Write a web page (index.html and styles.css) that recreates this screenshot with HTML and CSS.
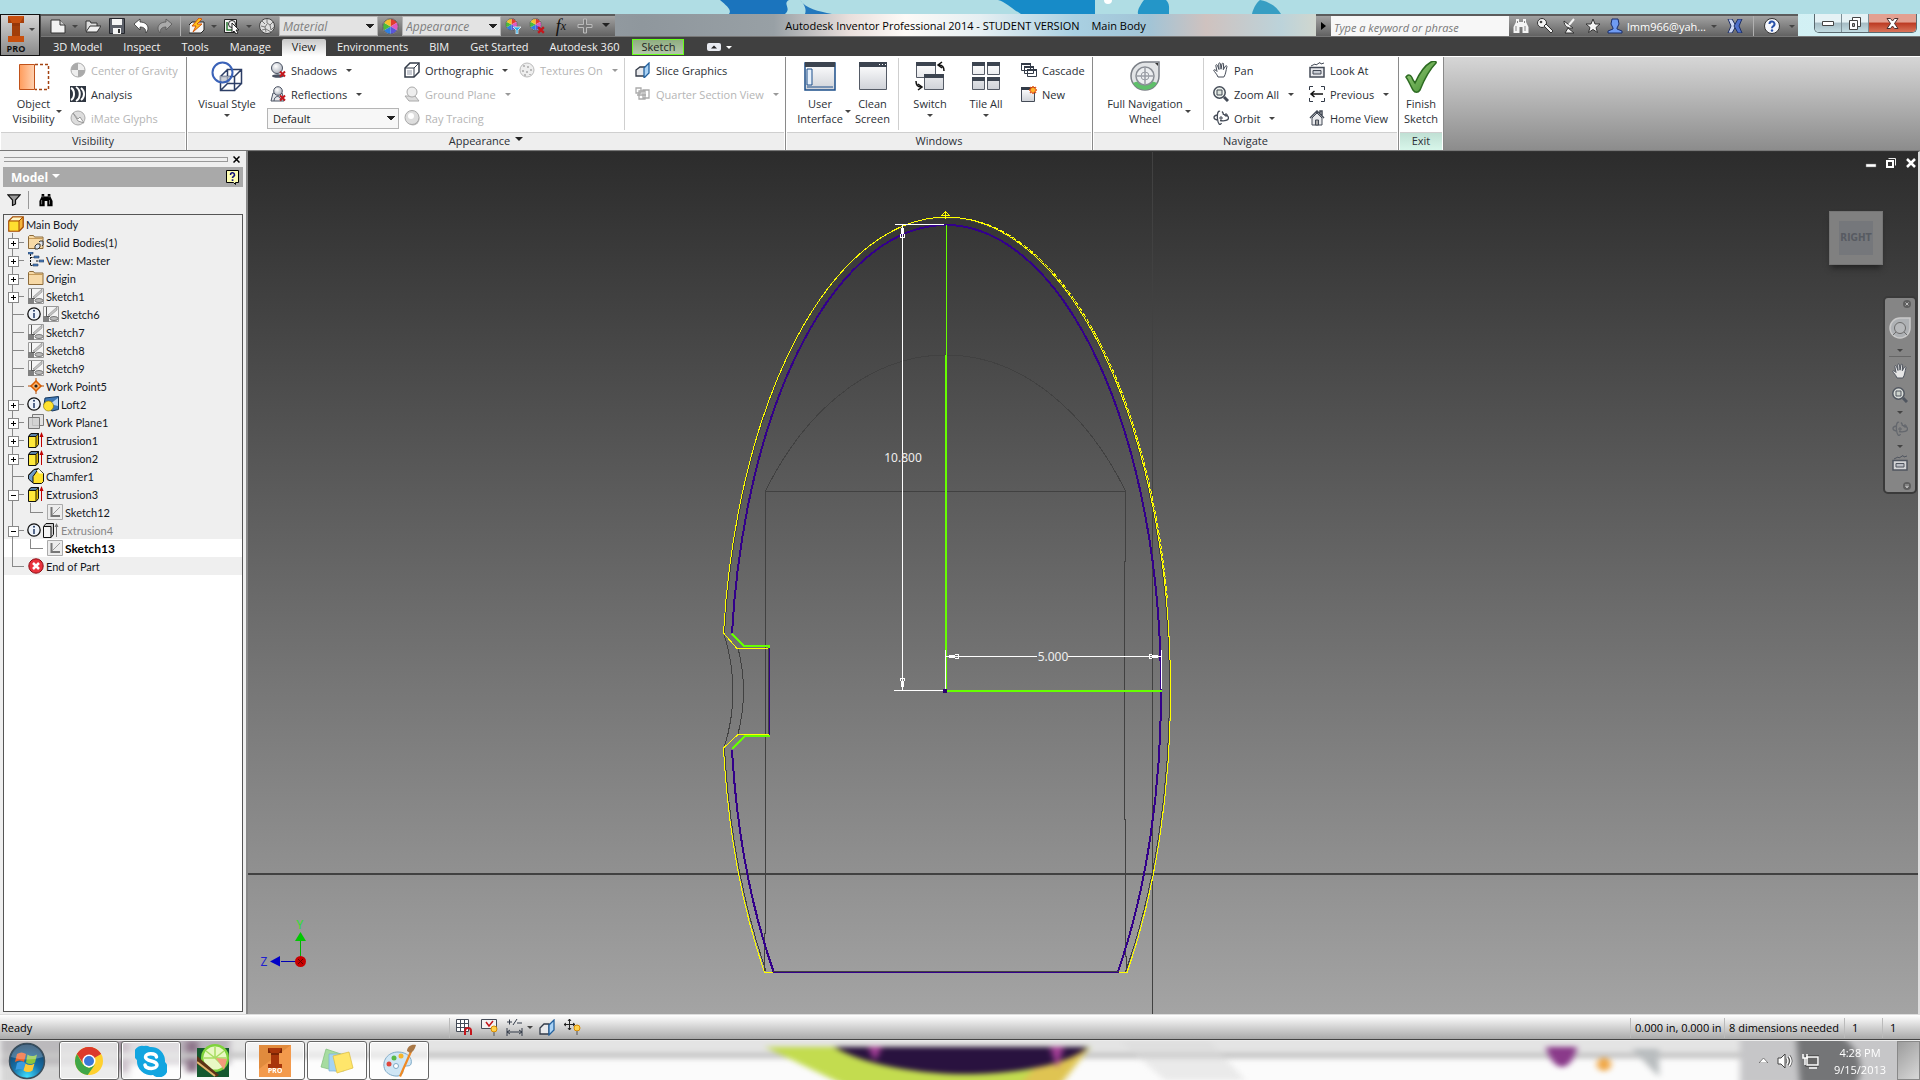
FILE: index.html
```html
<!DOCTYPE html>
<html lang="en">
<head>
    <meta charset="UTF-8">
    <meta name="viewport" content="width=device-width, initial-scale=1.0">
    <title>Autodesk Inventor Professional 2014 - Main Body</title>
    <link rel="stylesheet" href="styles.css">
</head>
<body>
    <!-- Shared icons -->
    <svg class="defs" width="0" height="0" aria-hidden="true">
        <defs>
            <linearGradient id="viewBg" x1="0" y1="0" x2="0" y2="1"><stop offset="0" stop-color="#2c2c2c"/><stop offset="1" stop-color="#a4a4a4"/></linearGradient>
            <linearGradient id="pane" x1="0" y1="0" x2="0" y2="1"><stop offset="0" stop-color="#fff"/><stop offset="1" stop-color="#cfd2d8"/></linearGradient>
            <linearGradient id="orange" x1="0" y1="0" x2="1" y2="0"><stop offset="0" stop-color="#ff9c5c"/><stop offset="1" stop-color="#ffd3b3"/></linearGradient>
            <linearGradient id="tick" x1="0" y1="0" x2="1" y2="1"><stop offset="0" stop-color="#9bd07c"/><stop offset="1" stop-color="#3f8a2e"/></linearGradient>
            <radialGradient id="ball" cx=".4" cy=".35" r=".7"><stop offset="0" stop-color="#fff"/><stop offset="1" stop-color="#aab0bb"/></radialGradient>
            <radialGradient id="orb" cx=".5" cy=".95" r=".95"><stop offset="0" stop-color="#3fe0ff"/><stop offset=".45" stop-color="#1670a8"/><stop offset="1" stop-color="#12375a"/></radialGradient>
        </defs>
        <symbol id="i-sketch" viewBox="0 0 16 16">
            <path d="M.5.500h15v15H.5z" fill="#f4f4f4" stroke="#999"/>
            <path d="M0 10h6v6H0z" fill="#808080"/>
            <path d="M3.500 1v9.500H7" fill="none" stroke="#555"/>
            <path d="M5 9l9-8v3l-7 6z" fill="#c4c4c4" stroke="#888" stroke-width=".6"/>
            <ellipse cx="11" cy="12.500" rx="4" ry="2" fill="#bbb" stroke="#777"/>
        </symbol>
        <symbol id="i-sketch-lite" viewBox="0 0 16 16">
            <path d="M.5.500h15v15H.5z" fill="#ececec" stroke="#aaa"/>
            <path d="M4.500 3v9H13" fill="none" stroke="#777" stroke-width="2"/>
            <path d="M5 11l8-8" stroke="#999"/>
        </symbol>
        <symbol id="i-extrude" viewBox="0 0 16 16">
            <path d="M.5 4.500L3 1.500h7.500v11L8 15.500H.5z" fill="#d9b400" stroke="#111"/>
            <path d="M.5 4.500L3 1.500h7.500L8 4.500z" fill="#5c83a8" stroke="#111"/>
            <path d="M1 5h6.500v10H1z" fill="#ffe83a"/>
            <path d="M8 5v10" stroke="#111" stroke-width=".8"/>
            <path d="M13.500 15V4" stroke="#c00000"/><path d="M11.500 5l2-5 2 5z" fill="#c00000"/>
        </symbol>
        <symbol id="i-extrude-gray" viewBox="0 0 16 16">
            <path d="M.5 4.500L3 1.500h7.500v11L8 15.500H.5z" fill="#ccc" stroke="#111"/>
            <path d="M1 5h6.500v10H1z" fill="#f6f6f6"/><path d="M1 4.500h7v11" fill="none" stroke="#111"/>
            <path d="M13.500 15V3" stroke="#777"/><path d="M11.500 5l2-4 2 4z" fill="#777"/>
        </symbol>
        <symbol id="i-info" viewBox="0 0 14 14">
            <circle cx="7" cy="7" r="6.200" fill="#eef3fa" stroke="#111" stroke-width="1.300"/>
            <path d="M7 6v5" stroke="#223a66" stroke-width="1.500"/><circle cx="7" cy="3.800" r="1" fill="#223a66"/>
        </symbol>
        <symbol id="i-folder" viewBox="0 0 16 16">
            <path d="M.5 14.500v-12l1-1h4l1 1.500h8.500v11.500z" fill="#f7d9a6" stroke="#8b6a3a"/>
            <path d="M1 4.500h14" stroke="#c59b5a"/>
        </symbol>
        <symbol id="i-hand" viewBox="0 0 16 16">
            <path d="M5 15C4 12 1 9.500.700 8.200c.6-1 2-.2 3.300 1.300L2.800 3.500c.2-1.200 1.300-1 1.700 0L6 7.500 5.700 1.800c.2-1.200 1.500-1.200 1.800 0L8 7.200 9 1.800c.4-1 1.600-.8 1.600.3L10.300 7.700 12.500 4c.7-.8 1.700-.2 1.400.8-1 3.500-1 7.200-3 10.200z" fill="#fff" stroke="#444b57"/>
        </symbol>
        <symbol id="i-zoom" viewBox="0 0 16 16">
            <circle cx="6.500" cy="6.500" r="5.700" fill="#eef3ee" stroke="#444b57" stroke-width="1.500"/>
            <path d="M4 4h5v5H4z" fill="#dde4dd" stroke="#444b57"/><path d="M11 11l4 4" stroke="#444b57" stroke-width="3"/>
        </symbol>
        <symbol id="i-orbit" viewBox="0 0 16 16">
            <path d="M7 1.500C5 0 4 4 4.500 9S7 16 8.500 13M9 1.500C10 2.500 10.500 4 10.500 5M4 5C0 6 0 9 4 10M7 10.500c5 1 8.500-.5 8.500-2.500S13 5 11 4.700" fill="none" stroke="#444b57" stroke-width="1.300"/>
            <path d="M6 8h4M8 6v4M13 3v4M11 5h4" stroke="#444b57"/>
        </symbol>
        <symbol id="i-lookat" viewBox="0 0 16 16">
            <path d="M1 5.500h14v9.500H1z" fill="#e8e9ec" stroke="#444b57" stroke-width="1.500"/>
            <path d="M4 8.500h8v3.500H4z" fill="#c8ccd4" stroke="#444b57"/><path d="M2 4l4-2 1 1 4-2.500 1 1.500 3-1" fill="none" stroke="#444b57"/>
        </symbol>
        <symbol id="i-rgb" viewBox="0 0 16 16">
            <circle cx="8" cy="8" r="7.500" fill="#eee"/>
            <path d="M8 8V1a7 7 0 0 1 6 3.500z" fill="#e23b2e"/><path d="M8 8l6-3.500a7 7 0 0 1 0 7z" fill="#e05ac0"/>
            <path d="M8 8l6 3.500A7 7 0 0 1 8 15z" fill="#5a55d8"/><path d="M8 8v7a7 7 0 0 1-6-3.500z" fill="#2f7fe0"/>
            <path d="M8 8l-6 3.500a7 7 0 0 1 0-7z" fill="#4cba3a"/><path d="M8 8L2 4.500A7 7 0 0 1 8 1z" fill="#f6c12c"/>
            <circle cx="8" cy="8" r="7.300" fill="none" stroke="#333" stroke-width=".7"/>
        </symbol>
        <symbol id="i-redx" viewBox="0 0 7 7"><path d="M1 1l5 5M6 1L1 6" stroke="#c4161c" stroke-width="2"/></symbol>
        <symbol id="i-bino" viewBox="0 0 16 16">
            <path d="M3 1h3v3h4V1h3v3l2.500 5v6H9.500V9h-3v6H.5V9L3 4z" fill="currentColor"/>
            <path d="M3 8v5M12 8v5M4.500 3v2M11.500 3v2" stroke="#888" stroke-width="1"/>
        </symbol>
    </svg>

    <!-- Strip of wallpaper above the maximised window -->
    <div class="wallpaper">
        <svg viewBox="0 0 1920 14" preserveAspectRatio="none" aria-hidden="true">
            <path d="M720 0h69c-7 4 3 8-4 14h-56c3-4-2-8-9-14z" fill="#1b74bd"/>
            <path d="M800 0c6 9 18 11 32 14h-27c2-5-1-10-5-14z" fill="#2478bd"/>
            <path d="M998 0h97v14h-74C1012 9 1006 2 998 0z" fill="#178bc8"/>
            <path d="M1144 0h22c4 4 3 8 3 14h-31c-1-4 3-10 6-14z" fill="#2496c8"/>
            <path d="M1252 14c1-5 4-11 8-14 10 2 17 7 21 14z" fill="#379ec3"/>
            <circle cx="1108" cy="0" r="4" fill="#fff"/>
        </svg>
    </div>

    <header class="app-header">
        <button class="app-button" aria-label="Application menu">
            <svg width="18" height="27" viewBox="0 0 18 27"><path d="M1 0h16v7h-4v13h4v6H1v-6h4V7H1z" fill="#c8500f"/><path d="M5 7h8v13H5z" fill="#a23e0a"/><path d="M1 0l4 7h8l4-7v7h-4v3H5V7H1z" fill="#8f3407" opacity=".6"/></svg>
            <i class="caret"></i>
            <span>PRO</span>
        </button>

        <div class="titlebar">
            <div class="qat">
                <button aria-label="New"><svg width="16" height="16" viewBox="0 0 16 16"><path d="M1 2h9l5 5v8H1z" fill="#f2f2f2" stroke="#333"/><path d="M10 2v5h5" fill="#ccc" stroke="#333"/></svg></button>
                <i class="caret narrow"></i>
                <button aria-label="Open"><svg width="16" height="16" viewBox="0 0 16 16"><path d="M1 13V3h4l1 2h6v3" fill="#ddd" stroke="#333"/><path d="M1 14l4-6h11l-4 6z" fill="#f0f0f0" stroke="#333"/></svg></button>
                <button aria-label="Save"><svg width="16" height="16" viewBox="0 0 16 16"><path d="M.5.500h15v15H.5z" fill="#5b5f68" stroke="#26282d"/><path d="M3 1h10v6H3zM4 10h8v6H4z" fill="#f4f4f4"/><path d="M9 11h2v4H9z" fill="#333"/></svg></button>
                <button aria-label="Undo"><svg width="16" height="16" viewBox="0 0 16 16"><path d="M1 6l6-5v3c5 0 8 3 8 6 0 2-1 4-2 5 0-4-2-6-6-6v3z" fill="#fff" stroke="#333" stroke-width=".8"/></svg></button>
                <button aria-label="Redo"><svg width="16" height="16" viewBox="0 0 16 16"><path d="M15 6L9 1v3C4 4 1 7 1 10c0 2 1 4 2 5 0-4 2-6 6-6v3z" fill="#aaa" stroke="#555" stroke-width=".8"/></svg></button>
                <span class="bar-sep"></span>
                <button aria-label="Update"><svg width="16" height="16" viewBox="0 0 16 16"><path d="M0 7l3-3h12v8l-3 3H0z" fill="#f4f4f4" stroke="#222"/><path d="M10 0L3 8h4l-3 6 9-8H8l5-5z" fill="#ffc21a" stroke="#d4550c"/></svg></button>
                <i class="caret narrow"></i>
                <button aria-label="Select"><svg width="16" height="16" viewBox="0 0 16 16"><path d="M.5 1.500h12v13H.5z" fill="#f4f4f4" stroke="#222"/><path d="M3 4v8h7" fill="none" stroke="#2d7a35" stroke-width="1.500"/><circle cx="8" cy="6" r="3.500" fill="none" stroke="#222"/><path d="M8 5v10l2-2 2 3 2-1-2-3h3z" fill="#fff" stroke="#222"/></svg></button>
                <i class="caret narrow"></i>
                <button aria-label="Adjust material"><svg width="16" height="16" viewBox="0 0 16 16"><circle cx="8" cy="8" r="7.500" fill="#ddd" stroke="#444"/><path d="M3 3l3 3M8 1v4l3 2 3-3M2 8l4 1 2-3M6 9l1 5M11 7l1 5 3-3M3 12l4-1 5 3" stroke="#777" fill="none"/></svg></button>
                <select class="qat-select" aria-label="Material"><option>Material</option></select>
                <button aria-label="Appearance browser"><svg width="17" height="17"><use href="#i-rgb"/></svg></button>
                <select class="qat-select" aria-label="Appearance"><option>Appearance</option></select>
                <button aria-label="Adjust appearance"><svg width="16" height="16" viewBox="0 0 16 16"><use href="#i-rgb" width="13" height="13"/><path d="M8 9h8l-3 3v4h-2v-4z" fill="#2aa9e6" stroke="#fff" stroke-width=".7"/></svg></button>
                <button aria-label="Clear appearance"><svg width="16" height="16" viewBox="0 0 16 16"><use href="#i-rgb" width="13" height="13"/><use href="#i-redx" x="8" y="8" width="8" height="8"/></svg></button>
                <button class="fx" aria-label="Parameters">f<sub>x</sub></button>
                <button aria-label="Add"><svg width="16" height="16" viewBox="0 0 16 16"><path d="M6.500 1h3v5.500H15v3H9.500V15h-3V9.500H1v-3h5.500z" fill="#777" stroke="#bbb"/></svg></button>
                <button class="qat-more" aria-label="Customize"><i class="caret big"></i></button>
            </div>
            <h1 class="window-title">Autodesk Inventor Professional 2014 - STUDENT VERSION <span>Main Body</span></h1>
            <div class="infocenter">
                <button class="ic-arrow" aria-label="Collapse search"><svg width="5" height="8" viewBox="0 0 5 8"><path d="M0 0l5 4-5 4z" fill="#000"/></svg></button>
                <input type="text" placeholder="Type a keyword or phrase" aria-label="Search help">
                <button class="white" aria-label="Search"><svg width="16" height="16"><use href="#i-bino"/></svg></button>
                <button aria-label="Subscription"><svg width="18" height="16" viewBox="0 0 18 16"><circle cx="6" cy="5" r="4.500" fill="#f4f4f4" stroke="#333"/><path d="M8 8l7 7 2-2-7-7z" fill="#f4f4f4" stroke="#333"/><circle cx="5" cy="4" r="1.300" fill="#444"/></svg></button>
                <button aria-label="Communication Center"><svg width="15" height="16" viewBox="0 0 15 16"><path d="M2 3c0 5 4 8 9 7z" fill="#f4f4f4" stroke="#333"/><path d="M7 7l5-6" stroke="#f4f4f4" stroke-width="2"/><path d="M3 15l3-5 6 5z" fill="#f4f4f4" stroke="#333"/></svg></button>
                <button aria-label="Favorites"><svg width="16" height="16" viewBox="0 0 16 16"><path d="M8 1l2 5h5l-4 3.500 1.500 5L8 11.500l-4.500 3 1.500-5L1 6h5z" fill="#f4f4f4" stroke="#333"/></svg></button>
                <button class="user" aria-label="Account"><svg width="16" height="16" viewBox="0 0 16 16"><path d="M5 1h6l1 5-2 4v1l5 2v2H1v-2l5-2v-1L4 6z" fill="#6f9bf2" stroke="#1b2f6b"/></svg>lmm966@yah...</button>
                <i class="caret narrow"></i>
                <button class="exchange" aria-label="Exchange Apps"><svg width="16" height="14" viewBox="0 0 16 14"><path d="M1 0h4l4 7-4 7H1l3-7z" fill="#cdd8f5" stroke="#1d2f66"/><path d="M15 0h-4L7 7l4 7h4l-3-7z" fill="#4f6fc9" stroke="#1d2f66"/></svg></button>
                <span class="bar-sep"></span>
                <button class="help" aria-label="Help"><svg width="16" height="16" viewBox="0 0 16 16"><circle cx="8" cy="8" r="7.500" fill="#f4f6fb" stroke="#333"/><path d="M5.500 6a2.500 2.500 0 1 1 3.500 2.300c-.8.500-1 .900-1 1.900" fill="none" stroke="#2750a8" stroke-width="2"/><circle cx="8" cy="12.500" r="1.200" fill="#2750a8"/></svg></button>
                <i class="caret narrow"></i>
            </div>
            <div class="window-buttons">
                <button aria-label="Minimize"><svg width="12" height="6" viewBox="0 0 12 6"><path d="M.5 1.500h11v4H.5z" fill="#fff" stroke="#444"/></svg></button>
                <button aria-label="Restore"><svg width="12" height="13" viewBox="0 0 12 13"><path d="M3.500.500h8v9h-8z" fill="#fff" stroke="#444"/><path d="M.5 3.500h8v9h-8z" fill="#fff" stroke="#444"/><path d="M3.500 6.500h2v3h-2z" fill="#aaa" stroke="#444"/></svg></button>
                <button class="close" aria-label="Close"><svg width="13" height="11" viewBox="0 0 13 11"><path d="M1 .5h3.500l2 2.500 2-2.500H12L8.500 5.500l3.500 5H8.500l-2-2.500-2 2.500H1l3.500-5z" fill="#fff" stroke="#4a3030"/></svg></button>
            </div>
        </div>

        <nav class="tabs">
            <a href="#">3D Model</a>
            <a href="#">Inspect</a>
            <a href="#">Tools</a>
            <a href="#">Manage</a>
            <a href="#" class="active">View</a>
            <a href="#">Environments</a>
            <a href="#">BIM</a>
            <a href="#">Get Started</a>
            <a href="#">Autodesk 360</a>
            <a href="#" class="sketch">Sketch</a>
            <button class="tab-toggle" aria-label="Minimize ribbon"><svg width="14" height="8" viewBox="0 0 14 8"><rect width="14" height="8" rx="2" fill="#e8eaf0"/><path d="M4 5.500l3-3 3 3z" fill="#222"/></svg><i class="caret light"></i></button>
        </nav>
    </header>

    <div class="ribbon">
        <section class="panel visibility">
            <div class="panel-body">
                <button class="big"><svg width="32" height="32" viewBox="0 0 32 32"><path d="M1.500 3.500h15v25h-15z" fill="url(#orange)" stroke="#c0521a"/><path d="M17 3.500h13.500v25H17" fill="none" stroke="#a34312" stroke-width="1.500" stroke-dasharray="3 2"/></svg><span>Object<br>Visibility</span><i class="caret"></i></button>
                <div class="col">
                    <button class="item" disabled><svg width="16" height="16" viewBox="0 0 16 16"><circle cx="8" cy="8" r="7" fill="#eee" stroke="#aaa"/><path d="M8 8V1a7 7 0 0 0-7 7zM8 8v7a7 7 0 0 0 7-7z" fill="#aaa"/></svg>Center of Gravity</button>
                    <button class="item"><svg width="16" height="16" viewBox="0 0 16 16"><path d="M0 0h16v16H0z" fill="#2e3540"/><path d="M1 2c4 2 4 10 0 12M6 1c5 3 5 11 0 14M11 2c4 3 4 9 0 12" fill="none" stroke="#fff" stroke-width="2"/></svg>Analysis</button>
                    <button class="item" disabled><svg width="16" height="16" viewBox="0 0 16 16"><circle cx="8" cy="8" r="7" fill="#ddd" stroke="#aaa"/><path d="M3 3l5 6 2-2 4 6-6-2z" fill="#fff" stroke="#999"/></svg>iMate Glyphs</button>
                </div>
            </div>
            <h2>Visibility</h2>
        </section>

        <section class="panel appearance">
            <div class="panel-body">
                <button class="big"><svg width="32" height="32" viewBox="0 0 32 32"><path d="M9.500 15.500h14v14h-14zM16.500 8.500h14v14h-14zM9.500 15.500l7-7M23.500 15.500l7-7M23.500 29.500l7-7M9.500 29.500l7-7" fill="none" stroke="#2c3e66" stroke-width="1.500"/><path d="M9 15h10v7H9z" fill="#b9bdc6" opacity=".7"/><circle cx="11.500" cy="11.500" r="10" fill="none" stroke="#3a62b8" stroke-width="2"/></svg><span>Visual Style</span><i class="caret below"></i></button>
                <div class="col">
                    <button class="item"><svg width="16" height="16" viewBox="0 0 16 16"><ellipse cx="8" cy="14" rx="6" ry="1.800" fill="#4a5262"/><circle cx="7" cy="6" r="5.500" fill="url(#ball)" stroke="#4a5262"/><use href="#i-redx" x="9" y="8" width="7" height="8"/></svg>Shadows<i class="caret"></i></button>
                    <button class="item"><svg width="16" height="16" viewBox="0 0 16 16"><path d="M1 15l2-8h9l2 8z" fill="#e4e6ea" stroke="#4a5262"/><circle cx="8" cy="5" r="4.300" fill="url(#ball)" stroke="#4a5262"/><path d="M4 15c0-6 7-6 7 0" fill="none" stroke="#4a5262"/><use href="#i-redx" x="9" y="8" width="7" height="8"/></svg>Reflections<i class="caret"></i></button>
                    <select class="ribbon-select" aria-label="Lighting style"><option>Default</option></select>
                </div>
                <div class="col">
                    <button class="item"><svg width="16" height="16" viewBox="0 0 16 16"><path d="M1 6l5-5h9v9l-5 5H1z" fill="#fff" stroke="#333b48" stroke-width="1.500"/><path d="M1 6h9v9" fill="none" stroke="#333b48"/><path d="M10 6l5-5" stroke="#333b48"/><path d="M3 8h5v5H3z" fill="#c9ccd3"/></svg>Orthographic<i class="caret"></i></button>
                    <button class="item" disabled><svg width="16" height="16" viewBox="0 0 16 16"><path d="M1 10h10l4 5H5z" fill="#ddd" stroke="#aaa"/><circle cx="8" cy="6" r="5" fill="#eee" stroke="#aaa"/></svg>Ground Plane<i class="caret"></i></button>
                    <button class="item" disabled><svg width="16" height="16" viewBox="0 0 16 16"><circle cx="9" cy="9" r="6.500" fill="#bbb"/><circle cx="8" cy="7.500" r="7" fill="#ddd" stroke="#aaa"/><circle cx="7" cy="6" r="3" fill="#fff"/></svg>Ray Tracing</button>
                </div>
                <div class="col">
                    <button class="item" disabled><svg width="16" height="16" viewBox="0 0 16 16"><circle cx="8" cy="8" r="7" fill="#eee" stroke="#bbb"/><path d="M5 3v2M9 4v2M12 7v2M4 8v2M8 9v2M11 12v1M6 12v2" stroke="#bbb" stroke-width="2"/></svg>Textures On<i class="caret"></i></button>
                </div>
                <div class="col divided">
                    <button class="item"><svg width="16" height="16" viewBox="0 0 16 16"><path d="M1 8l4-3h5v9H1z" fill="#e8e9ec" stroke="#333b48" stroke-width="1.300"/><path d="M9 6l5-5v10l-5 5z" fill="#a9d2f5" stroke="#23619e" stroke-width="1.300"/></svg>Slice Graphics</button>
                    <button class="item" disabled><svg width="16" height="16" viewBox="0 0 16 16"><path d="M1 2h5v5H1zM4 5h6v8H4zM8 4h6v8H8zM2 9h9" fill="none" stroke="#aaa" stroke-width="1.300"/></svg>Quarter Section View<i class="caret"></i></button>
                </div>
            </div>
            <h2>Appearance <i class="caret big"></i></h2>
        </section>

        <section class="panel windows">
            <div class="panel-body">
                <button class="big"><svg width="32" height="32" viewBox="0 0 32 32"><path d="M1 2h30v27H1z" fill="url(#pane)" stroke="#1c4f8a" stroke-width="1.500"/><path d="M1 1h30v5H1z" fill="#3c4450"/><path d="M3 8h5v16H3zM3 26h26" fill="#e6f0fb" stroke="#1c4f8a"/></svg><span>User<br>Interface</span><i class="caret"></i></button>
                <button class="big"><svg width="30" height="32" viewBox="0 0 30 32"><path d="M1.500 2.500h27v26h-27z" fill="url(#pane)" stroke="#555b66"/><path d="M1 1h28v5H1z" fill="#3c4450"/><path d="M21 3.500h1M24 3.500h1M27 3.500h1" stroke="#fff"/></svg><span>Clean<br>Screen</span></button>
                <span class="panel-sep"></span>
                <button class="big"><svg width="32" height="32" viewBox="0 0 32 32"><path d="M2.500 2.500h19v14h-19zM10.500 14.500h19v14h-19z" fill="url(#pane)" stroke="#555b66"/><path d="M2 1h20v4H2zM10 13h20v4H10z" fill="#3c4450"/><path d="M25 4c4 0 5 2 5 6M28 1l-4 3 4 3M7 26c-4 0-5-2-5-6M4 29l4-3-4-3" fill="none" stroke="#111" stroke-width="1.500"/></svg><span>Switch</span><i class="caret below"></i></button>
                <button class="big"><svg width="32" height="32" viewBox="0 0 32 32"><path d="M2.500 2.500h12v11h-12zM17.500 2.500h12v11h-12zM2.500 17.500h12v11h-12zM17.500 17.500h12v11h-12z" fill="url(#pane)" stroke="#555b66"/><path d="M2 1h13v4H2zM17 1h13v4H17zM2 16h13v4H2zM17 16h13v4H17z" fill="#3c4450"/></svg><span>Tile All</span><i class="caret below"></i></button>
                <div class="col">
                    <button class="item"><svg width="16" height="16" viewBox="0 0 16 16"><path d="M.5 1.500h9v7h-9zM3.500 4.500h9v7h-9zM6.500 7.500h9v7h-9z" fill="#fff" stroke="#333b48"/><path d="M0 1h10v2H0zM3 4h10v2H3zM6 7h10v2H6z" fill="#333b48"/></svg>Cascade</button>
                    <button class="item"><svg width="16" height="16" viewBox="0 0 16 16"><path d="M.5 2.500h13v13H.5z" fill="url(#pane)" stroke="#444b57"/><path d="M0 1h14v3H0z" fill="#333b48"/><path d="M12 0l1 2 2-1-1 2 2 1-2 1 1 2-2-1-1 2-1-2-2 1 1-2-2-1 2-1-1-2 2 1z" fill="#ffb52a" stroke="#e0420a" stroke-width=".8"/></svg>New</button>
                </div>
            </div>
            <h2>Windows</h2>
        </section>

        <section class="panel navigate">
            <div class="panel-body">
                <button class="big"><svg width="32" height="32" viewBox="0 0 32 32"><path d="M16 1h14v14a14 14 0 1 1-14-14z" fill="#e2e4e6" stroke="#7b7f86" stroke-width="1.500"/><path d="M4 22c6-3 18-3 24 0-5 9-19 9-24 0z" fill="#5fbf6a"/><circle cx="16" cy="15" r="9" fill="#eceef0" stroke="#8a8e95" stroke-width="1.500"/><path d="M16 6v18M7 15h18" stroke="#9a9ea5" stroke-width="1.500"/><circle cx="16" cy="15" r="4" fill="none" stroke="#9a9ea5"/><path d="M26 2l3 0v3z" fill="#333"/></svg><span>Full Navigation<br>Wheel</span><i class="caret"></i></button>
                <span class="panel-sep"></span>
                <div class="col">
                    <button class="item"><svg width="16" height="16"><use href="#i-hand"/></svg>Pan</button>
                    <button class="item"><svg width="16" height="16"><use href="#i-zoom"/></svg>Zoom All<i class="caret"></i></button>
                    <button class="item"><svg width="16" height="16"><use href="#i-orbit"/></svg>Orbit<i class="caret"></i></button>
                </div>
                <div class="col">
                    <button class="item"><svg width="16" height="16"><use href="#i-lookat"/></svg>Look At</button>
                    <button class="item"><svg width="16" height="16" viewBox="0 0 16 16"><path d="M4 .500H.500V4M12 .500h3.500V4M4 15.500H.500V12M12 15.500h3.500V12" fill="none" stroke="#333b48"/><path d="M2 8h12M5.500 5L2 8l3.500 3" fill="none" stroke="#111" stroke-width="1.500"/></svg>Previous<i class="caret"></i></button>
                    <button class="item"><svg width="16" height="16" viewBox="0 0 16 16"><path d="M1 8l7-7 7 7M11 4V1h2v5" fill="none" stroke="#444b57" stroke-width="1.500"/><path d="M3 8v7h10V8L8 3z" fill="#e8e9ec" stroke="#444b57"/><path d="M6.500 10h3v5h-3z" fill="#aaa" stroke="#444b57"/></svg>Home View</button>
                </div>
            </div>
            <h2>Navigate</h2>
        </section>

        <section class="panel exit">
            <div class="panel-body">
                <button class="big"><svg width="34" height="32" viewBox="0 0 34 32"><path d="M2 16c2-3 5-3 7 3l2 3C15 13 20 5 27 1c2-1 6-1 5 1-7 7-12 17-16 27-2 3-5 3-7 0-3-5-4-9-7-13z" fill="url(#tick)" stroke="#2d6b22" stroke-width="1.500"/></svg><span>Finish<br>Sketch</span></button>
            </div>
            <h2>Exit</h2>
        </section>
    </div>

    <main class="workspace">
        <aside class="browser">
            <div class="grip"><span></span><button aria-label="Close panel"><svg width="7" height="7" viewBox="0 0 7 7"><path d="M.5.500l6 6M6.500.500l-6 6" stroke="#000" stroke-width="1.500"/></svg></button></div>
            <div class="browser-title"><button>Model <i class="caret big light"></i></button>
                <button aria-label="Help"><svg width="13" height="15" viewBox="0 0 13 15"><path d="M.5.500h12v12h-3v2l-2-2h-7z" fill="#ffffb4" stroke="#000"/><path d="M4.500 5a2 2 0 1 1 3 1.500c-.8.400-1 .700-1 1.500" fill="none" stroke="#14147a" stroke-width="1.600"/><path d="M5.700 9.300h1.700v1.700H5.700z" fill="#14147a"/></svg></button>
            </div>
            <div class="browser-tools">
                <button aria-label="Filter"><svg width="14" height="12" viewBox="0 0 14 12"><path d="M.8.800h12.400L8.500 6v4L5.500 11.500V6z" fill="#999" stroke="#111" stroke-width="1.200"/></svg></button>
                <button aria-label="Find"><svg width="16" height="14"><use href="#i-bino"/></svg></button>
            </div>
            <ul class="tree">
                <li class="root"><svg width="16" height="16" viewBox="0 0 16 16"><path d="M.8 5l4-4h10.400v10l-4 4.200H.8z" fill="#f5b53c" stroke="#a34a00" stroke-width="1.300"/><path d="M1.500 5h9.500v9.500H1.500z" fill="#ffe030"/><path d="M2 4.500l3-3h9l-3 3z" fill="#fff6c9"/><path d="M1 5h10v10M11 5l4-4" fill="none" stroke="#a34a00"/></svg>Main Body</li>
                <li><i class="box plus"></i><svg width="16" height="16" viewBox="0 0 16 16"><use href="#i-folder"/><path d="M7 12l2-2h3v3l-2 2H7zM11 8l1-1h3v4l-1 1" fill="#dce4f0" stroke="#333"/></svg>Solid Bodies(1)</li>
                <li><i class="box plus"></i><svg width="16" height="16" viewBox="0 0 16 16"><path d="M2.500 2v12M2.500 5.500H6M2.500 13.500H5M8 9h3" stroke="#111" stroke-dasharray="2 1" fill="none"/><path d="M0 0h5v2H0zM6 4h5v2H6zM11 8h5v2h-5zM5 12h5v2H5z" fill="#4a7fc0" stroke="#23395c" stroke-width=".6"/></svg>View: Master</li>
                <li><i class="box plus"></i><svg width="16" height="16"><use href="#i-folder"/></svg>Origin</li>
                <li><i class="box plus"></i><svg width="16" height="16"><use href="#i-sketch"/></svg>Sketch1</li>
                <li><i class="box"></i><svg width="14" height="14" class="info"><use href="#i-info"/></svg><svg width="16" height="16"><use href="#i-sketch"/></svg>Sketch6</li>
                <li><i class="box"></i><svg width="16" height="16"><use href="#i-sketch"/></svg>Sketch7</li>
                <li><i class="box"></i><svg width="16" height="16"><use href="#i-sketch"/></svg>Sketch8</li>
                <li><i class="box"></i><svg width="16" height="16"><use href="#i-sketch"/></svg>Sketch9</li>
                <li><i class="box"></i><svg width="16" height="16" viewBox="0 0 16 16"><path d="M8 0v16M0 8h16" stroke="#b34a00"/><path d="M8 3l5 5-5 5-5-5z" fill="#ffb066" stroke="#d85c00" stroke-width="1.500"/><circle cx="8" cy="8" r="1.600" fill="#222"/></svg>Work Point5</li>
                <li><i class="box plus"></i><svg width="14" height="14" class="info"><use href="#i-info"/></svg><svg width="16" height="16" viewBox="0 0 16 16"><path d="M2 2l13.500-1.500v13L9 15 1 9z" fill="#3f78b5" stroke="#14365c"/><path d="M7 8l8-6v8z" fill="#b9d6f2"/><circle cx="5.500" cy="10" r="5" fill="#ffe22e" stroke="#7d6a00" stroke-width=".6"/></svg>Loft2</li>
                <li><i class="box plus"></i><svg width="16" height="16" viewBox="0 0 16 16"><path d="M4.500.500h11v11h-11z" fill="#e2e2e2" stroke="#777"/><path d="M.5 3.500h11v11H.5z" fill="#cfcfcf" fill-opacity=".8" stroke="#777"/></svg>Work Plane1</li>
                <li><i class="box plus"></i><svg width="16" height="16"><use href="#i-extrude"/></svg>Extrusion1</li>
                <li><i class="box plus"></i><svg width="16" height="16"><use href="#i-extrude"/></svg>Extrusion2</li>
                <li><i class="box"></i><svg width="16" height="16" viewBox="0 0 16 16"><path d="M.5 7L6 1.500 10.500.5l5 5v8l-2 2h-8l-5-5z" fill="#ffe22e" stroke="#111"/><path d="M.5 7.500L6 1.500h4L5 8.500v6.500l-4.500-4z" fill="#6f9cc8" stroke="#111"/><path d="M9 2l2-1 4 4.500h-4L9 3z" fill="#fffbe0"/></svg>Chamfer1</li>
                <li><i class="box minus"></i><svg width="16" height="16"><use href="#i-extrude"/></svg>Extrusion3</li>
                <li class="child"><i class="box"></i><i class="elbow"></i><svg width="16" height="16"><use href="#i-sketch-lite"/></svg>Sketch12</li>
                <li class="muted"><i class="box minus"></i><svg width="14" height="14" class="info"><use href="#i-info"/></svg><svg width="16" height="16"><use href="#i-extrude-gray"/></svg>Extrusion4</li>
                <li class="child selected"><i class="box"></i><i class="elbow"></i><svg width="16" height="16"><use href="#i-sketch-lite"/></svg>Sketch13</li>
                <li class="last"><i class="box"></i><svg width="16" height="16" viewBox="0 0 16 16"><circle cx="8" cy="8" r="7.200" fill="#e8323c" stroke="#8c0b14"/><path d="M5 5l6 6M11 5l-6 6" stroke="#fff" stroke-width="2.500"/></svg>End of Part</li>
            </ul>
        </aside>

        <section class="viewport" aria-label="Sketch view">
            <svg class="drawing" viewBox="248 152 1670 862" preserveAspectRatio="xMidYMid slice">
                <rect x="248" y="152" width="1670" height="862" fill="url(#viewBg)"/>
                <!-- projected edges -->
                <g fill="none" stroke="#414141" shape-rendering="crispEdges">
                    <path d="M1152.500 152v862"/>
                    <path d="M248 874h1670" stroke-width="2"/>
                    <path d="M764.500 971V933.500h1V491.500h360v70h-1v258h1v137h1v14.500"/>
                    <path d="M765.500 491A223 332 0 0 1 1125.500 491"/>
                    <path d="M724 634q18 58 0 114M738 648q11 43 0 86"/>
                    <path d="M724.500 633A224 472 0 0 1 946 218A224 472 0 0 1 1169.500 690A224 472 0 0 1 1125.500 972M766 971A224 472 0 0 1 724.500 748"/>
                </g>
                <g fill="none" stroke="#33008a" stroke-width="2" shape-rendering="crispEdges">
                    <path d="M732 633A215.500 465 0 0 1 946 225A215.500 465 0 0 1 1161 690A215.500 465 0 0 1 1118 971.500M773.500 971.500A215.500 465 0 0 1 732 750M773 972h346"/>
                    <path d="M769.500 648v87" stroke-width="1"/>
                </g>
                <g fill="none" stroke="#ff0" shape-rendering="crispEdges">
                    <path d="M723.500 633A225 473 0 0 1 945.500 217A225 473 0 0 1 1170.500 690A225 473 0 0 1 1127 972.500H1119M773 972.500h-8.500A225 473 0 0 1 723.500 748"/>
                    <path d="M960 218A223 471 0 0 1 1167.500 600" stroke-dasharray="5 2"/>
                    <path d="M723.500 633L737 648.500h32M723.500 748L738 734.500h31"/>
                    <path d="M941.500 215.500h8l-4-4zM945.500 211v8"/>
                </g>
                <path d="M768.500 648v86M773 971.500h346" stroke="#414141" shape-rendering="crispEdges"/>
                <g fill="none" stroke="#6f0" stroke-width="2" shape-rendering="crispEdges">
                    <path d="M946.500 225v130" stroke-width="1"/>
                    <path d="M946 355v336M946 691h216"/>
                    <path d="M732 634l12 12h25v2M732 749l13-13h25"/>
                </g>
                <!-- dimensions -->
                <path d="M943 689h4v4h-4z" fill="#2b0070"/>
                <g fill="none" stroke="#fff" shape-rendering="crispEdges">
                    <path d="M902.500 225v465M895 224.500h49M894 690.500h49M945.500 650v39M1161.500 650v39M946 656.500h91M1068 656.500h93"/>
                    <path d="M902.500 225l-2 12h4zM902.500 690l-2-12h4zM946 656.500l12-2v4zM1161 656.500l-12-2v4z"/>
                </g>
                <g class="dims">
                    <text x="903" y="462">10.800</text>
                    <text x="1053" y="661">5.000</text>
                </g>
                <!-- axis triad -->
                <path d="M300.500 956v-16" stroke="#00b400"/><path d="M295 941l5.500-9 5.500 9z" fill="#00c800"/>
                <path d="M281 961.500h15" stroke="#0000b4"/><path d="M280 956l-10 5.500 10 5z" fill="#0000c8"/>
                <circle cx="300.500" cy="961.500" r="5.500" fill="#c80000"/><path d="M298 959l5 5M303 959l-5 5" stroke="#600"/>
                <g class="axis"><text x="300" y="929" fill="#2be02b">Y</text><text x="264" y="966" fill="#2020d0">Z</text></g>
            </svg>

            <div class="view-tools">
                <div class="doc-buttons">
                    <button aria-label="Minimize document"><svg width="12" height="12" viewBox="0 0 12 12"><path d="M1 7h10v3H1z" fill="#fff" stroke="#777" stroke-width=".5"/></svg></button>
                    <button aria-label="Restore document"><svg width="12" height="12" viewBox="0 0 12 12"><path d="M3.500 1.500h7v7" fill="none" stroke="#eee"/><path d="M2 4h6v6H2z" fill="#333" stroke="#fff" stroke-width="2"/></svg></button>
                    <button aria-label="Close document"><svg width="12" height="12" viewBox="0 0 12 12"><path d="M2 2l8 8M10 2l-8 8" stroke="#fff" stroke-width="2.500"/></svg></button>
                </div>
                <button class="view-cube"><span>RIGHT</span></button>
                <div class="nav-bar">
                    <button class="end" aria-label="Close navigation bar"><svg width="8" height="8" viewBox="0 0 8 8"><circle cx="4" cy="4" r="4" fill="#555"/><path d="M2.500 2.500l3 3M5.500 2.500l-3 3" stroke="#ccc"/></svg></button>
                    <button class="wheel" aria-label="Navigation wheel"><svg width="22" height="22" viewBox="0 0 22 22"><path d="M11 1h10v10A10 10 0 1 1 11 1z" fill="#b9bcc0" stroke="#dcdcdc" stroke-width="1.500"/><circle cx="11" cy="11" r="5.500" fill="#c4c6c9" stroke="#666"/><path d="M7 15l-3 3M15 15l3 3" stroke="#666"/></svg></button>
                    <i class="caret"></i>
                    <hr>
                    <button aria-label="Pan"><svg width="16" height="16"><use href="#i-hand"/></svg></button>
                    <button aria-label="Zoom"><svg width="16" height="16"><use href="#i-zoom"/></svg></button>
                    <i class="caret"></i>
                    <button class="dim" aria-label="Orbit"><svg width="16" height="16"><use href="#i-orbit"/></svg></button>
                    <i class="caret"></i>
                    <button aria-label="Look at"><svg width="16" height="16"><use href="#i-lookat"/></svg></button>
                    <button class="end bottom" aria-label="Navigation bar options"><svg width="8" height="8" viewBox="0 0 8 8"><circle cx="4" cy="4" r="4" fill="#555"/><path d="M2 3h4M2.500 4.500h3L4 6z" stroke="#ccc" fill="#ccc" stroke-width=".8"/></svg></button>
                </div>
            </div>
        </section>
    </main>

    <div class="statusbar">
        <span class="ready">Ready</span>
        <div class="status-tools">
            <button aria-label="Snap to grid"><svg width="17" height="17" viewBox="0 0 17 17"><path d="M.5.500h12v12H.5zM4.500.500v12M8.500.500v12M.5 4.500h12M.5 8.500h12" fill="#fff" stroke="#444b57"/><path d="M9 16v-4a3 3 0 0 1 6 0v4" fill="none" stroke="#c4161c" stroke-width="2"/></svg></button>
            <button aria-label="Constraint visibility"><svg width="17" height="17" viewBox="0 0 17 17"><path d="M.5.500h15v9H.5z" fill="#f2f2f2" stroke="#444b57"/><path d="M5 3l3 4 4-5" stroke="#c4161c" fill="none" stroke-width="1.500"/><circle cx="13" cy="10" r="3" fill="#ffd24a" stroke="#d88a00"/><path d="M12 13h2v4h-2z" fill="#888"/></svg></button>
            <button aria-label="Relax dimensions"><svg width="17" height="17" viewBox="0 0 17 17"><path d="M1 3h5M3.500.500v5M7 6l4-6M11 4h5M1 9v8M16 9v8M1 13h15M4 11l-3 2 3 2M13 11l3 2-3 2" fill="none" stroke="#333b48"/></svg></button>
            <i class="caret"></i>
            <button aria-label="Slice graphics"><svg width="17" height="17" viewBox="0 0 17 17"><path d="M1 9l4-4h5v10H1z" fill="#e8e9ec" stroke="#333b48" stroke-width="1.300"/><path d="M10 6l5-5v10l-5 5z" fill="#a9d2f5" stroke="#23619e" stroke-width="1.300"/></svg></button>
            <button aria-label="Show all degrees of freedom"><svg width="17" height="17" viewBox="0 0 17 17"><path d="M5.500 0v11M0 5.500h11M4 2l1.500-2L7 2M4 9l1.500 2L7 9M2 4L0 5.500 2 7M9 4l2 1.500L9 7" fill="none" stroke="#222"/><circle cx="13" cy="9" r="3" fill="#ffd24a" stroke="#d88a00"/><path d="M12 12h2v4h-2z" fill="#888"/></svg></button>
        </div>
        <div class="status-cells">
            <span class="coords">0.000 in, 0.000 in</span>
            <span class="needed">8 dimensions needed</span>
            <span class="count">1</span>
            <span class="count">1</span>
        </div>
    </div>

    <footer class="taskbar">
        <!-- blurred wallpaper behind the glass -->
        <svg class="glass" viewBox="0 0 1920 40" preserveAspectRatio="none" aria-hidden="true">
            <g class="soft">
                <path d="M0-5h1900v19H0z" fill="#e4e4e4"/>
                <path d="M0-5h230v30H0z" fill="#b9b3bb"/>
                <path d="M0-5h130v50H0z" fill="#bdbdbd" opacity=".6"/>
                <path d="M120 0h9v32h-9zM186 0h12v32h-12z" fill="#8d7489"/>
                <path d="M0 12h1800v6H0z" fill="#c6c6c6"/>
                <path d="M765 6h325l-32 42H850Z" fill="#c3dc4f"/>
                <path d="M1040 20l48-12-30 40h-40z" fill="#dfc452"/>
                <path d="M834 6h254c-20 20-80 28-122 28s-100-8-132-28z" fill="#29123f"/>
                <path d="M868 6h14l-7 15zM1050 6h14l-7 22z" fill="#a63f98"/>
                <path d="M1120 0h90l35 40h-80z" fill="#d9d9d9" opacity=".5"/>
                <path d="M1546 6h31q-4 19-15 21-11-2-16-21z" fill="#8a3a8a"/>
                <circle cx="1604" cy="24" r="7" fill="#f0a848"/>
                <path d="M1632 8h27v29z" fill="#b9bdbf"/>
                <path d="M1740-5h200v50h-200z" fill="#c6c6c8"/>
                <path d="M1796-5h46q28 24 14 50h-56z" fill="#747577"/>
            </g>
        </svg>
        <nav class="tasks">
            <button class="start" aria-label="Start"><svg width="38" height="38" viewBox="0 0 38 38"><circle cx="19" cy="19" r="17.500" fill="url(#orb)" stroke="#3c4f5c" stroke-width="1.500"/><path d="M9 12c3-2 6-2 9 0l-2 8c-3-2-6-2-9 0z" fill="#f0622b"/><path d="M19.500 12.500c3 2 6 2 9.500 0l-2 8c-3 2-6 2-9 0z" fill="#8cc63f"/><path d="M7 21c3-2 6-2 8.500 0l-2 7c-2.500-1.500-5-1.500-8 0z" fill="#3b9be0" transform="translate(2 0)"/><path d="M17.500 21.500c3 2 6 2 9 0l-2 7c-3 2-6 2-9 0z" fill="#ffc936"/><path d="M3 15a16.500 16.500 0 0 1 32 0q-16 5-32 0z" fill="#fff" opacity=".25"/></svg></button>
            <button class="task" aria-label="Google Chrome"><svg width="30" height="30" viewBox="0 0 30 30"><circle cx="15" cy="15" r="14" fill="#ffd02e"/><path d="M15 15L2.900 8A14 14 0 0 1 27.100 8z" fill="#dc3a2c"/><path d="M15 8h12.100A14 14 0 0 0 2.900 8L9 17z" fill="#dc3a2c"/><path d="M2.900 8a14 14 0 0 0 10.800 21L21 18.500 15 22 9 18.500z" fill="#3fa648"/><circle cx="15" cy="15" r="6.500" fill="#fff"/><circle cx="15" cy="15" r="5" fill="#3b78d8"/></svg></button>
            <button class="task" aria-label="Skype"><svg width="32" height="32" viewBox="0 0 32 32"><path d="M9 1a8 8 0 0 1 6 1A14 14 0 0 1 30 17a8 8 0 0 1-12 13A14 14 0 0 1 2 15 8 8 0 0 1 9 1z" fill="#12a5e0"/><path d="M21.500 12c-.5-4-11-4.500-11 0 0 5 11.500 3 11.500 8 0 4.500-11 4.500-12 0" fill="none" stroke="#fff" stroke-width="3.500" stroke-linecap="round"/></svg></button>
            <button class="task plain" aria-label="Paint program"><svg width="32" height="34" viewBox="0 0 32 34"><path d="M0 4h32v29H0z" fill="#14582e"/><circle cx="18" cy="14" r="14" fill="#7fd33c"/><circle cx="18" cy="14" r="11.500" fill="#e9f8c4"/><path d="M18 14L9 7M18 14V3M18 14l9-7M18 14h11M18 14l8 8M18 14H7" stroke="#a8dc62" stroke-width="1.500"/><path d="M19 14l11 1-3 11z" fill="#f29a7a"/><path d="M0 12l22 19-3 2L0 20z" fill="#5b3216"/><path d="M0 18l18 14" stroke="#e0b56c" stroke-width="2"/></svg></button>
            <button class="task" aria-label="Autodesk Inventor"><svg width="32" height="32" viewBox="0 0 32 32"><path d="M0 0h32v32H0z" fill="#f39a4c"/><path d="M0 0h32L0 24z" fill="#d98438" opacity=".7"/><path d="M9 3h14v5h-3v11h3v4H9v-4h3V8H9z" fill="#a8360a"/><path d="M9 3l3 5h8l3-5v5h-3v2h-8V8H9z" fill="#7a2404"/></svg><span>PRO</span></button>
            <button class="task" aria-label="Sticky Notes"><svg width="34" height="26" viewBox="0 0 34 26"><path d="M6 1l15 5-5 17-15-4z" fill="#a6dca0" stroke="#7fbf7a" stroke-width=".7"/><path d="M9 6h15v17H9z" fill="#a5d3f2" stroke="#7fb3da" stroke-width=".7"/><path d="M13 8l16-4 4 16-16 5z" fill="#ffe66b" stroke="#dcbb3a" stroke-width=".7"/></svg></button>
            <button class="task" aria-label="Paint"><svg width="34" height="34" viewBox="0 0 34 34"><path d="M3 26C-1 17 6 8 16 8c9 0 15 6 13 12-1 3-5 1-7 3-2 3 1 8-6 9-5 .6-11-2-13-6z" fill="#cfe6f5" stroke="#7ea9c6"/><circle cx="7" cy="20" r="2.500" fill="#e0483e"/><circle cx="12" cy="14" r="2.500" fill="#59b948"/><circle cx="19" cy="12" r="2.500" fill="#f6b52c"/><circle cx="14" cy="22" r="2.500" fill="#fff" stroke="#7ea9c6"/><path d="M28 7l2 1-11 25-2-1z" fill="#f08a24"/><path d="M25 7c0-4 4-7 9-6-1 4-3 7-6 8z" fill="#a97847"/></svg></button>
        </nav>
        <div class="tray">
            <button aria-label="Show hidden icons"><svg width="9" height="5" viewBox="0 0 9 5"><path d="M0 5l4.500-5L9 5z" fill="#fff" stroke="#555" stroke-width=".7"/></svg></button>
            <button aria-label="Volume"><svg width="16" height="16" viewBox="0 0 16 16"><path d="M1 5h3l4-4v14l-4-4H1z" fill="#fff" stroke="#444"/><path d="M10 5q2 3 0 6M12 3q4 5 0 10" fill="none" stroke="#555" stroke-width="3"/><path d="M10 5q2 3 0 6M12 3q4 5 0 10" fill="none" stroke="#fff" stroke-width="1.500"/></svg></button>
            <button aria-label="Network"><svg width="17" height="16" viewBox="0 0 17 16"><path d="M5 4h11v8H5z" fill="#555" stroke="#333" stroke-width="3"/><path d="M5 4h11v8H5z" fill="#666" stroke="#fff" stroke-width="1.500"/><path d="M7 15h8M1 1v4h4V1M3 5v7" stroke="#fff" fill="none" stroke-width="1.500"/></svg></button>
            <time>4:28 PM<br>9/15/2013</time>
            <button class="show-desktop" aria-label="Show desktop"></button>
        </div>
    </footer>
</body>
</html>
```
FILE: styles.css
```css
* {
    box-sizing: border-box;
}
html, body {
    margin: 0;
    padding: 0;
}
body {
    height: 100vh;
    display: flex;
    flex-direction: column;
    overflow: hidden;
    font-family: "Open Sans", "Noto Sans", sans-serif;
    font-size: 11px;
    color: #2b2f36;
    background-color: #efefef;
}
button, input, select {
    font: inherit;
    color: inherit;
}
button {
    padding: 0;
    border: none;
    background: none;
    cursor: pointer;
}
svg {
    display: block;
    flex: none;
}
a {
    text-decoration: none;
}
.defs {
    position: absolute;
}
.caret {
    flex: none;
    width: 0;
    height: 0;
    border: 3px solid transparent;
    border-top-color: #444;
    border-bottom: none;
}
.caret.big {
    border-width: 4px;
    border-bottom: none;
    border-top-color: #222;
}
.caret.light {
    border-top-color: #fff;
}
.caret.narrow {
    margin: 0 3px;
}

/* Wallpaper strip */
.wallpaper {
    height: 14px;
    background-color: #b0dde4;
}
.wallpaper svg {
    width: 100%;
    height: 14px;
}

/* Title bar and tabs */
.app-header {
    display: grid;
    grid-template-columns: 41px 1fr;
    grid-template-rows: 23px 19px;
    background-color: #404040;
}
.app-button {
    grid-row: 1 / 3;
    display: grid;
    grid-template-columns: 24px 8px;
    justify-content: center;
    align-items: center;
    justify-items: center;
    margin-right: 1px;
    border: 1px solid #111;
    background: linear-gradient(#d5d5d5, #8a8a8a);
}
.app-button span {
    font-size: 9px;
    font-weight: bold;
    line-height: 10px;
    color: #111;
}
.titlebar {
    display: flex;
    min-width: 0;
    border-bottom: 1px solid #777;
    background: linear-gradient(90deg, #c0c8cc 0, #8f979d 32%, #98a0a5 39%, #e9dfdc 43%, #fdfaf7 46%, #e6eff2 50%, #a9d0e2 55%, #a2c4d6 59%, #cfc2bf 62%, #bcd3da 66%, #ddd9c8 69%, #cdeef2 73%, #d4f1f5 100%);
}
.qat, .infocenter {
    display: flex;
    align-items: center;
    border-top: 2px solid #5c5c5c;
    background: linear-gradient(#a2a2a2, #626262);
}
.qat {
    width: 574px;
    padding-left: 5px;
}
.qat button {
    display: flex;
    flex: none;
    justify-content: center;
    align-items: center;
    width: 24px;
    height: 20px;
}
.qat .caret.narrow {
    margin: 0 3px 0 2px;
}
.bar-sep {
    flex: none;
    width: 1px;
    height: 20px;
    margin: 0 4px 0 3px;
    background-color: #b0b0b0;
}
.qat-select, .ribbon-select {
    appearance: none;
    border: 1px solid #b5b5b5;
    border-radius: 0;
    background-image: linear-gradient(to bottom right, #222 50%, transparent 50%), linear-gradient(to bottom left, #222 50%, transparent 50%);
    background-repeat: no-repeat;
    background-size: 4px 5px;
    background-position: right 3px center, right 7px center;
}
.qat-select {
    flex: none;
    width: 99px;
    height: 20px;
    padding: 0 12px 0 3px;
    background-color: #e3e3e3;
    font-size: 12px;
    font-style: italic;
    color: #808080;
}
.qat .fx {
    font-family: "Liberation Serif", serif;
    font-size: 18px;
    font-style: italic;
    color: #111;
}
.fx sub {
    font-size: 12px;
    line-height: 1;
}
.qat .qat-more {
    flex: 1;
}
.window-title {
    flex: 1;
    margin: 0;
    font-size: 11px;
    line-height: 23px;
    font-weight: normal;
    text-align: center;
    white-space: nowrap;
    color: #000;
}
.window-title span {
    margin-left: 9px;
}
.infocenter {
    width: 482px;
}
.infocenter button {
    display: flex;
    justify-content: center;
    align-items: center;
    width: 24px;
    height: 20px;
}
.infocenter .ic-arrow {
    width: 15px;
}
.infocenter input {
    width: 178px;
    height: 20px;
    padding: 2px 3px 0;
    border: none;
    background-color: #f7f7f7;
    font-size: 11px;
    font-style: italic;
}
.infocenter input::placeholder {
    color: #777;
}
.infocenter .white {
    color: #f4f4f4;
}
.infocenter .user {
    flex: 1;
    gap: 4px;
    color: #fff;
}
.infocenter .exchange {
    width: 30px;
}
.infocenter .help {
    width: 28px;
}
.window-buttons {
    display: flex;
    align-self: flex-start;
    margin: 0 3px 0 16px;
    border: 1px solid #5a6a70;
    border-top: none;
    border-radius: 0 0 5px 5px;
    overflow: hidden;
}
.window-buttons button {
    display: flex;
    justify-content: center;
    align-items: center;
    width: 27px;
    height: 18px;
    border-right: 1px solid #7c8f96;
    background: linear-gradient(#e5f2f5 45%, #a5bcc4 50%, #c3dde3);
}
.window-buttons .close {
    width: 47px;
    border: none;
    background: linear-gradient(#e3a091 45%, #bc3a22 50%, #d8745a);
}
.tabs {
    display: flex;
    align-items: flex-end;
    gap: 1px;
    padding-left: 2px;
}
.tabs a {
    height: 17px;
    padding: 0 10px;
    font-size: 11px;
    line-height: 15px;
    color: #f2f2f2;
    white-space: nowrap;
}
.tabs a.active {
    border-radius: 2px 2px 0 0;
    background: linear-gradient(#c8c8c8, #fff);
    color: #222;
}
.tabs a.sketch {
    height: 16px;
    margin: 0 0 1px 2px;
    padding: 0 8px;
    border: 1px solid #66ff1a;
    background: linear-gradient(#8fae80, #b4c6ab);
    color: #222;
    line-height: 13px;
}
.tab-toggle {
    display: flex;
    align-items: center;
    gap: 5px;
    height: 18px;
    margin-left: 22px;
}

/* Ribbon */
.ribbon {
    display: flex;
    height: 95px;
    border-top: 1px solid #fff;
    border-bottom: 1px solid #777;
    background: linear-gradient(#d6d6d6, #8c8c8c);
}
.panel {
    display: flex;
    flex-direction: column;
    border-right: 1px solid #8a8a8a;
    background-color: #fff;
}
.panel-body {
    flex: 1;
    display: grid;
    padding-top: 1px;
    min-height: 0;
}
.panel h2 {
    display: flex;
    justify-content: center;
    align-items: center;
    gap: 5px;
    height: 18px;
    margin: 0 1px;
    padding-bottom: 2px;
    border-top: 1px solid #cfcfcf;
    background-color: #eee;
    font-size: 11px;
    font-weight: normal;
}
.visibility {
    width: 187px;
}
.visibility .panel-body {
    grid-template-columns: 67px 1fr;
}
.appearance {
    width: 599px;
}
.appearance .panel-body {
    grid-template-columns: 80px 134px 115px 108px 1fr;
}
.windows {
    width: 307px;
}
.windows .panel-body {
    grid-template-columns: 68px 37px 15px 48px 64px 1fr;
}
.navigate {
    width: 306px;
}
.navigate .panel-body {
    grid-template-columns: 104px 13px 96px 1fr;
}
.exit {
    width: 45px;
}
.exit h2 {
    background: linear-gradient(#c0e0d4, #d8f6ea);
}
.big {
    display: grid;
    grid-template-columns: 1fr auto 1fr;
    align-content: start;
    align-items: center;
    justify-items: center;
    padding-top: 3px;
    line-height: 15px;
    white-space: nowrap;
}
.big svg {
    grid-column: 1 / 4;
    margin-bottom: 3px;
}
.big span {
    grid-column: 2;
}
.big .caret {
    grid-column: 3;
    justify-self: start;
    margin-left: 2px;
}
.big .caret.below {
    grid-column: 1 / 4;
    justify-self: center;
    margin: 3px 0 0;
}
.col {
    display: flex;
    flex-direction: column;
    min-width: 0;
}
.col.divided {
    margin-bottom: 2px;
    padding-left: 7px;
    border-left: 1px solid #cfcfcf;
}
.item {
    display: flex;
    align-items: center;
    gap: 5px;
    height: 24px;
    padding-left: 3px;
    white-space: nowrap;
}
.item .caret {
    margin-left: 4px;
}
.item:disabled {
    color: #b5b5b5;
    cursor: default;
}
.item:disabled .caret {
    border-top-color: #999;
}
.ribbon-select {
    width: 132px;
    height: 21px;
    margin-top: 2px;
    padding: 0 16px 0 5px;
    background-color: #f7f7f7;
    color: #222;
}
.panel-sep {
    justify-self: center;
    width: 1px;
    margin-bottom: 2px;
    background-color: #cfcfcf;
}

/* Workspace */
.workspace {
    flex: 1;
    display: flex;
    min-height: 0;
}
.browser {
    display: flex;
    flex-direction: column;
    width: 248px;
    padding: 0 3px 2px;
    border-right: 2px solid #888;
    font-family: Lato, "Open Sans", sans-serif;
    color: #14181f;
}
.grip {
    display: flex;
    align-items: center;
    gap: 5px;
    height: 16px;
}
.grip span {
    flex: 1;
    height: 5px;
    margin-left: 1px;
    border: 1px solid #999;
    border-left: none;
}
.grip button {
    width: 10px;
}
.browser-title {
    display: flex;
    justify-content: space-between;
    align-items: center;
    height: 20px;
    padding: 0 4px 0 8px;
    background-color: #a9a9a9;
    font-family: "Open Sans", sans-serif;
    font-size: 12px;
    font-weight: bold;
    color: #fff;
}
.browser-title button {
    display: flex;
    align-items: center;
    gap: 4px;
}
.browser-tools {
    display: flex;
    align-items: center;
    gap: 7px;
    height: 27px;
    padding: 0 4px 2px;
    color: #000;
}
.browser-tools button + button {
    padding: 2px 0 2px 9px;
    border-left: 1px solid #999;
}
.tree {
    flex: 1;
    margin: 0;
    padding: 0;
    border: 1px solid #555;
    background-color: #fff;
    list-style: none;
    font-size: 11px;
}
.tree li {
    display: flex;
    align-items: center;
    gap: 2px;
    height: 18px;
    padding-left: 4px;
    background-color: #efefef;
    white-space: nowrap;
}
.tree .info {
    margin-left: -1px;
}
/* column of the tree: vertical trunk, branch and expander box */
.box {
    position: relative;
    align-self: stretch;
    width: 18px;
    background: linear-gradient(#888, #888) 4px 0 / 1px 100% no-repeat, linear-gradient(#888, #888) 4px 9px / 12px 1px no-repeat;
}
.last .box {
    background-size: 1px 10px, 12px 1px;
}
.child .box {
    background-size: 1px 100%, 0 0;
}
.box.plus::before, .box.minus::before {
    content: "";
    position: absolute;
    left: 0;
    top: 5px;
    width: 9px;
    height: 9px;
    border: 1px solid #888;
    background: linear-gradient(#000, #000) center / 5px 1px no-repeat, #fff;
}
.box.plus::before {
    background: linear-gradient(#000, #000) center / 5px 1px no-repeat, linear-gradient(#000, #000) center / 1px 5px no-repeat, #fff;
}
.elbow {
    align-self: flex-start;
    width: 13px;
    height: 10px;
    margin: 0 2px;
    border-left: 1px solid #888;
    border-bottom: 1px solid #888;
}
.tree .muted {
    color: #888;
}
.tree .selected {
    background-color: #fff;
    font-size: 12px;
    font-weight: bold;
    color: #000;
}
.viewport {
    position: relative;
    flex: 1;
    min-width: 0;
    border-top: 1px solid #333;
    border-right: 2px solid #ddd;
    background: linear-gradient(#2c2c2c, #a4a4a4);
}
.drawing {
    width: 100%;
    height: 100%;
}
.dims text, .axis text {
    font-family: "Noto Sans", sans-serif;
    text-anchor: middle;
}
.dims text {
    font-size: 12px;
    fill: #eee;
}
.axis text {
    font-size: 12px;
}
/* floats over the drawing */
.view-tools {
    position: absolute;
    top: 5px;
    right: 1px;
    display: flex;
    flex-direction: column;
    align-items: flex-end;
}
.doc-buttons {
    display: flex;
    gap: 8px;
}
.view-cube {
    display: flex;
    justify-content: center;
    align-items: center;
    width: 54px;
    height: 54px;
    margin: 42px 34px 31px 0;
    border: 1px solid #757575;
    background-color: #808080;
    box-shadow: 0 5px 6px -2px #222;
}
.view-cube span {
    width: 34px;
    line-height: 34px;
    background-color: #75777b;
    font-family: "DejaVu Sans Condensed", sans-serif;
    font-size: 10px;
    font-weight: bold;
    color: #585b62;
}
.nav-bar {
    display: flex;
    flex-direction: column;
    align-items: center;
    width: 34px;
    height: 198px;
    padding: 2px 4px;
    border: 2px solid #3a3a3a;
    border-radius: 5px;
    background-color: #858585;
}
.nav-bar svg {
    opacity: .8;
}
.nav-bar .dim svg {
    opacity: .5;
}
.nav-bar button + button {
    margin-top: 8px;
}
.nav-bar button + .caret {
    margin: 8px 0 7px;
}
.nav-bar .end {
    align-self: flex-end;
}
.nav-bar .end + .wheel {
    margin: 9px 0 10px;
}
.nav-bar .wheel + .caret {
    margin: 0;
}
.nav-bar hr {
    width: 100%;
    margin: 4px 0 6px;
    border: none;
    border-top: 1px solid #666;
}
.nav-bar button + .bottom {
    margin-top: auto;
}

/* Status bar */
.statusbar {
    display: flex;
    align-items: center;
    height: 26px;
    padding-top: 1px;
    border-top: 1px solid #ddd;
    border-bottom: 1px solid #444;
    background: linear-gradient(#fff, #a9a9a9);
    color: #000;
}
.ready {
    width: 449px;
    padding-left: 1px;
}
.status-tools {
    display: flex;
    align-items: center;
    gap: 8px;
    height: 20px;
    padding-left: 6px;
    border-left: 1px solid #bbb;
}
.status-tools .caret {
    margin: 0 -2px 0 -4px;
}
.status-cells {
    display: flex;
    margin-left: auto;
    line-height: 20px;
}
.status-cells span {
    padding-left: 4px;
    border-left: 1px solid #bbb;
    white-space: nowrap;
}
.status-cells .coords {
    width: 94px;
}
.status-cells .needed {
    width: 120px;
}
.status-cells .count {
    width: 38px;
    padding-left: 7px;
}

/* Taskbar */
.taskbar {
    position: relative;
    display: flex;
    justify-content: space-between;
    height: 40px;
    background-color: #fbfbfb;
    border-top: 1px solid #ececec;
    overflow: hidden;
}
.glass {
    position: absolute;
    width: 100%;
    height: 100%;
}
.soft {
    filter: blur(3px);
}
.tasks, .tray {
    position: relative;
    display: flex;
}
.tasks {
    gap: 2px;
}
.start {
    display: flex;
    align-items: center;
    width: 57px;
    padding-left: 8px;
}
.task {
    display: grid;
    place-items: center;
    width: 60px;
    border: 1px solid #666;
    border-radius: 3px;
    background-color: rgba(255, 255, 255, .55);
    box-shadow: inset 0 0 0 1px #fff;
}
.task.plain {
    border-color: transparent;
    background: none;
    box-shadow: none;
}
.task svg, .task span {
    grid-area: 1 / 1;
}
.task span {
    align-self: end;
    padding-bottom: 4px;
    font-size: 7px;
    font-weight: bold;
    color: #fff;
}
.tray {
    align-items: center;
}
.tray button {
    margin-right: 9px;
}
.tray time {
    width: 64px;
    margin-right: 5px;
    font-size: 11px;
    line-height: 17px;
    text-align: center;
    color: #fff;
}
.tray .show-desktop {
    width: 23px;
    height: 39px;
    margin-right: 0;
    border: 1px solid #888;
    background: linear-gradient(135deg, #9c9c9c, #d8d8d8);
}
```
